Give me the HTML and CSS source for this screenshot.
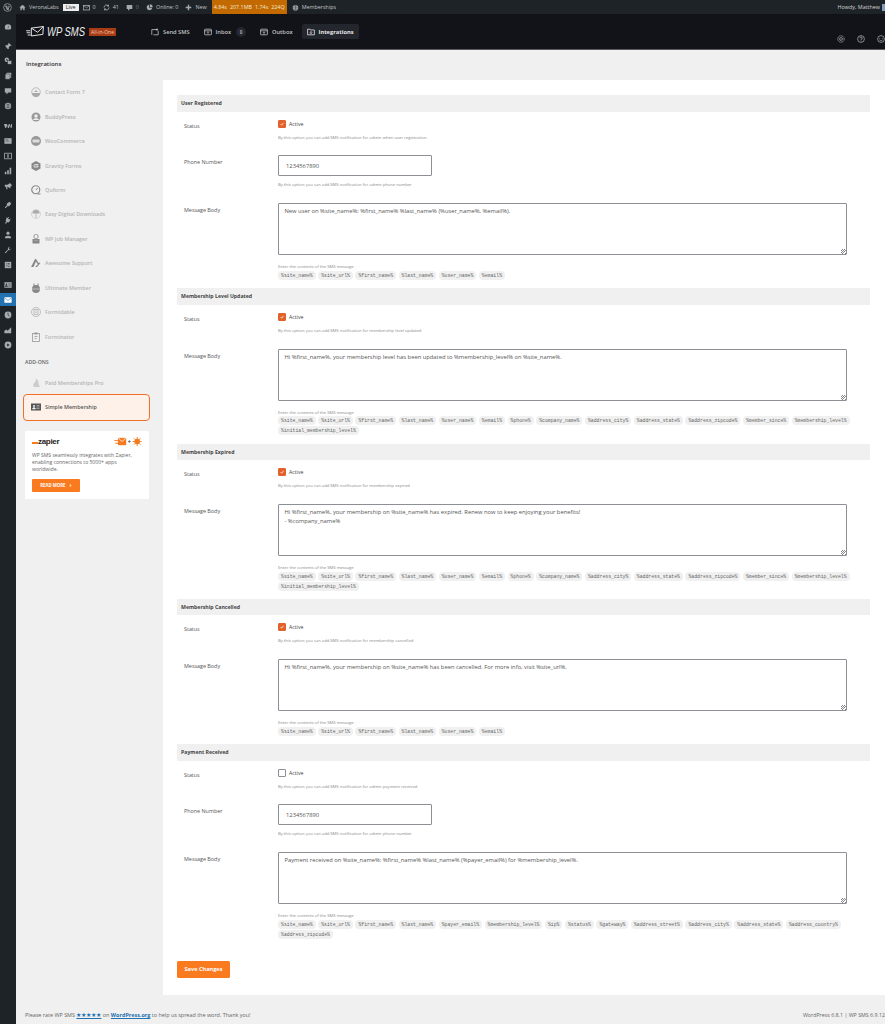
FILE: index.html
```html
<!DOCTYPE html>
<html lang="en">
<head>
  <meta charset="UTF-8">
  <title>Integrations - WP SMS</title>
  <link rel="stylesheet" href="styles.css">
</head>
<body>

  <div class="adminbar">
    <div class="bar_left">
      <svg class="bar_wp" viewBox="0 0 20 20"><circle cx="10" cy="10" r="8.6" fill="none" stroke="currentColor" stroke-width="1.6"/><path d="M4.5 7h4l2.6 8.5L14 7h-2.5M6.5 7l3 8.5" fill="none" stroke="currentColor" stroke-width="1.8"/></svg>
      <span class="bar_item home"><svg viewBox="0 0 20 20"><path d="M10 2 1 10h3v8h4v-5h4v5h4v-8h3z" fill="currentColor"/></svg>VeronaLabs <b class="live">Live</b></span>
      <span class="bar_item"><svg viewBox="0 0 20 20"><rect x="1" y="4" width="18" height="13" fill="none" stroke="currentColor" stroke-width="2.4"/><path d="m2 5 8 6 8-6" fill="none" stroke="currentColor" stroke-width="2"/></svg>0</span>
      <span class="bar_item"><svg viewBox="0 0 20 20"><path d="M3 10a7 7 0 0 1 12-5M17 10a7 7 0 0 1-12 5" fill="none" stroke="currentColor" stroke-width="2.6"/><path d="M17 1v6h-6zM3 19v-6h6z" fill="currentColor"/></svg>41</span>
      <span class="bar_item dim"><svg viewBox="0 0 20 20"><path d="M2 3h16v11h-7l-5 5v-5H2z" fill="#a7aaad"/></svg>0</span>
      <span class="bar_item"><svg viewBox="0 0 20 20"><path d="M9 2a8 8 0 1 0 9 9H9z" fill="currentColor"/><path d="M11 1v8h8a8 8 0 0 0-8-8z" fill="currentColor"/></svg>Online: 0</span>
      <span class="bar_item new"><svg viewBox="0 0 20 20"><path d="M8 2h4v6h6v4h-6v6H8v-6H2V8h6z" fill="currentColor"/></svg>New</span>
      <span class="bar_perf"><i>4.84s</i><i>207.1MB</i><i>1.74s</i><i>224Q</i></span>
      <span class="bar_item"><svg viewBox="0 0 20 20"><circle cx="10" cy="11" r="8" fill="currentColor"/><path d="M10 3v16M2 11h16M5 5c3 2 7 2 10 0M5 17c3-2 7-2 10 0" stroke="#1d2327" fill="none"/></svg>Memberships</span>
    </div>
    <div class="bar_right">Howdy, Matthew <i class="bar_avatar"></i></div>
  </div>

  <div class="shell">
    <nav class="wpmenu">
      <div class="menu_group">
        <span class="menu_icon"><svg viewBox="0 0 20 20"><path d="M10 3a8 8 0 0 0-8 8c0 2 .8 4 2 5h12c1.2-1 2-3 2-5a8 8 0 0 0-8-8zm1 9H9l3-6z" fill="currentColor"/></svg></span>
      </div>
      <div class="menu_group">
        <span class="menu_icon"><svg viewBox="0 0 20 20"><path d="m11 1 8 8-2 1-1-1-4 4 0 4-2 1-4-4-4 5 4-6-3-3 1-2h4l4-4-1-1z" fill="currentColor"/></svg></span>
        <span class="menu_icon"><svg viewBox="0 0 20 20"><circle cx="7" cy="7" r="5.5" fill="currentColor"/><rect x="9" y="9" width="10" height="9" fill="currentColor" stroke="#1d2327"/><circle cx="7" cy="7" r="1.8" fill="#1d2327"/></svg></span>
        <span class="menu_icon"><svg viewBox="0 0 20 20"><rect x="6" y="2" width="12" height="13" rx="1" fill="currentColor"/><rect x="3" y="5" width="12" height="13" rx="1" fill="currentColor" stroke="#1d2327"/></svg></span>
        <span class="menu_icon"><svg viewBox="0 0 20 20"><path d="M2 3h16v11h-7l-5 5v-5H2z" fill="currentColor"/></svg></span>
        <span class="menu_icon"><svg viewBox="0 0 20 20"><circle cx="10" cy="10" r="8" fill="currentColor"/><path d="M10 2v16M2 10h16M4.5 5c3 2 8 2 11 0M4.5 15c3-2 8-2 11 0" stroke="#1d2327" fill="none"/></svg></span>
      </div>
      <div class="menu_group">
        <span class="menu_icon"><svg viewBox="0 0 20 20"><path d="m0 5 3 10h2l3-6 2 6h2l3-6 2 6h2l2-10h-3l-2 6-2-6h-2l-2 6-3-6z" fill="currentColor"/></svg></span>
        <span class="menu_icon"><svg viewBox="0 0 20 20"><rect x="1" y="3" width="18" height="14" fill="currentColor"/><path d="M4 7h6M4 10h9" stroke="#1d2327"/></svg></span>
        <span class="menu_icon"><svg viewBox="0 0 20 20"><rect x="1.5" y="3" width="17" height="14" fill="none" stroke="currentColor" stroke-width="2"/><path d="M12 7H9v3h2v3H8M10 5v10" fill="none" stroke="currentColor" stroke-width="1.5"/></svg></span>
        <span class="menu_icon"><svg viewBox="0 0 20 20"><path d="M2 12h4v6H2zM8 8h4v10H8zM14 2h4v16h-4z" fill="currentColor"/></svg></span>
        <span class="menu_icon"><svg viewBox="0 0 20 20"><path d="M2 7h7l7-5v14l-7-4H8l1 6H6l-1-6H2z" fill="currentColor"/><circle cx="16" cy="8" r="3" fill="currentColor"/></svg></span>
      </div>
      <div class="menu_group">
        <span class="menu_icon"><svg viewBox="0 0 20 20"><path d="m2 16 6-6-2-2 5-5 1 1 2-2 4 4-2 2 1 1-5 5-2-2-6 6z" fill="currentColor"/></svg></span>
        <span class="menu_icon"><svg viewBox="0 0 20 20"><path d="m7 3 2 2 3-3 1 1-3 3 3 3 3-3 1 1-3 3 2 2-5 4-2-1-4 4H3l-1-1 4-4-2-2z" fill="currentColor"/></svg></span>
        <span class="menu_icon"><svg viewBox="0 0 20 20"><circle cx="10" cy="5.5" r="4" fill="currentColor"/><path d="M2 18c0-8 16-8 16 0z" fill="currentColor"/></svg></span>
        <span class="menu_icon"><svg viewBox="0 0 20 20"><path d="M18 5a5 5 0 0 1-7 5l-7 8-2-2 8-7a5 5 0 0 1 5-7l-3 3 1 3 3 1z" fill="currentColor"/></svg></span>
        <span class="menu_icon"><svg viewBox="0 0 20 20"><rect x="2" y="2" width="16" height="16" fill="currentColor"/><path d="M5 7h4M5 12h4M12 5v4M10 7h4M11 12l3 3M14 12l-3 3" stroke="#1d2327" stroke-width="1.3"/></svg></span>
      </div>
      <div class="menu_group">
        <span class="menu_icon"><svg viewBox="0 0 20 20"><rect x="1" y="3" width="18" height="14" fill="currentColor"/><circle cx="6" cy="8" r="2" fill="#1d2327"/><path d="M3 14c0-4 6-4 6 0zM11 7h6M11 10h6M11 13h6" fill="#1d2327" stroke="#1d2327"/></svg></span>
        <span class="menu_icon active"><svg viewBox="0 0 20 20"><rect x="1" y="3" width="18" height="14" rx="1" fill="#fff"/><path d="m2 5 8 6 8-6" fill="none" stroke="#2271b1" stroke-width="1.5"/></svg></span>
        <span class="menu_icon"><svg viewBox="0 0 20 20"><circle cx="10" cy="10" r="8.5" fill="currentColor"/><path d="M10 4v6l4 3" fill="none" stroke="#1d2327" stroke-width="1.5"/></svg></span>
        <span class="menu_icon"><svg viewBox="0 0 20 20"><path d="M1 18v-6l5-3 3 3 9-9v15z" fill="currentColor"/></svg></span>
        <span class="menu_icon"><svg viewBox="0 0 20 20"><circle cx="10" cy="10" r="8.5" fill="currentColor"/><path d="m8 6 6 4-6 4z" fill="#1d2327"/></svg></span>
      </div>
    </nav>

    <div class="main">
      <header class="plugin_header">
        <div class="logo">
          <svg viewBox="0 0 34 21"><path d="M10 4 33 1l-1 15-22 3zM10 4l12 8L33 1" fill="none" stroke="#eee" stroke-width="1.8"/><path d="M0 9h8M1 13h7M3 17h6" stroke="#ddd" stroke-width="2"/></svg>
          <span class="logo_text">WP SMS</span>
          <span class="logo_badge">All-in-One</span>
        </div>
        <nav class="tabs">
          <a href="#" class="tab"><svg viewBox="0 0 20 20"><path d="M2 17V4h13M18 7v10H6M15 1v6M12 4h6" fill="none" stroke="currentColor" stroke-width="2"/></svg>Send SMS</a>
          <a href="#" class="tab"><svg viewBox="0 0 20 20"><rect x="1.5" y="3" width="17" height="14" rx="1.5" fill="none" stroke="currentColor" stroke-width="2"/><path d="M1 7h18M10 8v5M7.5 11l2.5 2.5 2.5-2.5" fill="none" stroke="currentColor" stroke-width="1.8"/></svg>Inbox <span class="tab_count">0</span></a>
          <a href="#" class="tab"><svg viewBox="0 0 20 20"><rect x="1.5" y="3" width="17" height="14" rx="1.5" fill="none" stroke="currentColor" stroke-width="2"/><path d="M1 7h18M10 16v-6M7.5 12 10 9.5l2.5 2.5" fill="none" stroke="currentColor" stroke-width="1.8"/></svg>Outbox</a>
          <a href="#" class="tab current"><svg viewBox="0 0 20 20"><path d="M1.5 17V3h6l2 2h9v12z" fill="none" stroke="currentColor" stroke-width="2"/><path d="M10 7v7M7 11l3 3 3-3" fill="none" stroke="currentColor" stroke-width="1.8"/></svg>Integrations</a>
        </nav>
        <div class="header_icons">
          <svg viewBox="0 0 20 20"><circle cx="10" cy="10" r="8" fill="none" stroke="currentColor" stroke-width="1.8" stroke-dasharray="4 1"/><circle cx="10" cy="10" r="3.5" fill="none" stroke="currentColor" stroke-width="1.8"/></svg>
          <svg viewBox="0 0 20 20"><circle cx="10" cy="10" r="8.5" fill="none" stroke="currentColor" stroke-width="1.8"/><path d="M7 8a3 3 0 1 1 3 3v2M10 14v2" fill="none" stroke="currentColor" stroke-width="1.8"/></svg>
          <svg viewBox="0 0 20 20"><circle cx="10" cy="10" r="8.5" fill="none" stroke="currentColor" stroke-width="1.8"/><circle cx="7" cy="8" r="1.2" fill="currentColor"/><circle cx="13" cy="8" r="1.2" fill="currentColor"/><path d="M6 12c2 3 6 3 8 0" fill="none" stroke="currentColor" stroke-width="1.6"/></svg>
        </div>
      </header>

      <h1 class="page_title">Integrations</h1>

      <div class="columns">
        <aside class="side">
          <ul class="side_list">
            <li><svg viewBox="0 0 20 20"><circle cx="10" cy="10" r="8.5" fill="none" stroke="#aaa" stroke-width="1.5"/><path d="M2 12h16a8 8 0 0 1-16 0zM6 10l4-4 4 4z" fill="#aaa"/></svg>Contact Form 7</li>
            <li><svg viewBox="0 0 20 20"><circle cx="10" cy="10" r="9" fill="#999"/><circle cx="10" cy="8" r="3.5" fill="#eee"/><path d="M4 16c1-5 11-5 12 0z" fill="#eee"/></svg>BuddyPress</li>
            <li><svg viewBox="0 0 20 20"><circle cx="10" cy="10" r="10" fill="#999"/><rect x="3" y="7" width="14" height="6" rx="1.5" fill="#ddd"/></svg>WooCommerce</li>
            <li><svg viewBox="0 0 20 20"><path d="M10 0 19 5v10l-9 5-9-5V5z" fill="#888"/><path d="M15 7H8a2 2 0 0 0-2 2v3h8V10H9" fill="none" stroke="#eee" stroke-width="1.6"/></svg>Gravity Forms</li>
            <li><svg viewBox="0 0 20 20"><circle cx="9.5" cy="9.5" r="8" fill="none" stroke="#888" stroke-width="2.4"/><path d="M10 10l3-4M13 18h6" stroke="#888" stroke-width="2"/></svg>Quform</li>
            <li><svg viewBox="0 0 20 20"><circle cx="10" cy="10" r="9" fill="none" stroke="#bbb"/><path d="M3 9a7 7 0 0 1 14 0z" fill="#aaa"/><path d="M10 9v9" stroke="#aaa" stroke-width="1.5"/></svg>Easy Digital Downloads</li>
            <li><svg viewBox="0 0 20 20"><rect x="6" y="1" width="8" height="8" rx="3" fill="none" stroke="#888" stroke-width="1.6"/><rect x="3" y="10" width="14" height="9" fill="#888"/><path d="M7 13h2M11 13h2" stroke="#eee"/></svg>WP Job Manager</li>
            <li><svg viewBox="0 0 20 20"><path d="M0 18 8 2h2l6 9-3 1-3-5-5 11zM8 18l9-9 2 1-7 8z" fill="#888"/></svg>Awesome Support</li>
            <li><svg viewBox="0 0 20 20"><circle cx="10" cy="12" r="8" fill="#888"/><path d="M6 1v8M14 1v8" stroke="#888" stroke-width="2"/><path d="M2 12h16" stroke="#eee"/></svg>Ultimate Member</li>
            <li><svg viewBox="0 0 20 20"><circle cx="10" cy="10" r="9" fill="none" stroke="#aaa" stroke-width="1.4"/><rect x="6" y="5" width="8" height="10" fill="none" stroke="#aaa" stroke-width="1.4"/><path d="M8 8h4M8 11h4" stroke="#aaa"/></svg>Formidable</li>
            <li><svg viewBox="0 0 20 20"><rect x="3" y="3" width="14" height="16" fill="none" stroke="#999" stroke-width="1.6"/><rect x="7" y="1" width="6" height="4" fill="#999"/><path d="M7 9h6M7 13h4" stroke="#999" stroke-width="1.6"/></svg>Forminator</li>
          </ul>
          <h2 class="side_heading">ADD-ONS</h2>
          <ul class="side_list">
            <li><svg viewBox="0 0 20 20"><path d="M10 1c4 3 6 7 5 11l3 6H6c-3-4 0-6 0-9 2 1 3 0 4-8z" fill="#ccc"/></svg>Paid Memberships Pro</li>
            <li class="selected"><svg viewBox="0 0 20 20"><rect x="0" y="3" width="20" height="14" fill="#555"/><circle cx="6" cy="8" r="2" fill="#eee"/><path d="M3 14c0-4 6-4 6 0zM11 7h6M11 10h6M11 13h6" fill="#eee" stroke="#eee"/></svg>Simple Membership</li>
          </ul>
          <div class="zapier">
            <div class="zapier_top">
              <span class="zapier_logo"><i></i>zapier</span>
              <svg viewBox="0 0 30 12"><path d="M0 5h5M1 8h5" stroke="#f47b20"/><path d="M4 2h9v8H4z" fill="#f47b20"/><path d="m4 2 4.5 4L13 2" fill="none" stroke="#fff" stroke-width=".8"/><path d="M15 6h3M16.5 4.5v3" stroke="#777"/><circle cx="25" cy="6" r="3" fill="#f47b20"/><path d="M25 1v10M20 6h10M21.5 2.5l7 7M28.5 2.5l-7 7" stroke="#f47b20"/></svg>
            </div>
            <p>WP SMS seamlessly integrates with Zapier, enabling connections to 5000+ apps worldwide.</p>
            <a href="#" class="zapier_btn">READ MORE <span>›</span></a>
          </div>
        </aside>

        <form class="card">

          <section class="group">
            <h3 class="group_title">User Registered</h3>
            <div class="row status_row">
              <div class="row_label">Status</div>
              <div class="row_field">
                <label class="active_label"><span class="check on"><svg viewBox="0 0 10 10"><path d="m2.5 5 2 2 3-4" fill="none" stroke="#fff" stroke-width="1.2"/></svg></span>Active</label>
                <p class="help">By this option you can add SMS notification for admin when user registration</p>
              </div>
            </div>
            <div class="row phone_row">
              <div class="row_label">Phone Number</div>
              <div class="row_field">
                <input class="text_input" type="text" value="1234567890">
                <p class="help">By this option you can add SMS notification for admin phone number</p>
              </div>
            </div>
            <div class="row body_row">
              <div class="row_label">Message Body</div>
              <div class="row_field">
                <div class="area_wrap"><textarea class="area">New user on %site_name%: %first_name% %last_name% (%user_name%, %email%).</textarea><i class="grip"></i></div>
                <p class="help">Enter the contents of the SMS message</p>
                <div class="chips">
                  <code>%site_name%</code><code>%site_url%</code><code>%first_name%</code><code>%last_name%</code><code>%user_name%</code><code>%email%</code>
                </div>
              </div>
            </div>
          </section>

          <section class="group">
            <h3 class="group_title">Membership Level Updated</h3>
            <div class="row status_row">
              <div class="row_label">Status</div>
              <div class="row_field">
                <label class="active_label"><span class="check on"><svg viewBox="0 0 10 10"><path d="m2.5 5 2 2 3-4" fill="none" stroke="#fff" stroke-width="1.2"/></svg></span>Active</label>
                <p class="help">By this option you can add SMS notification for membership level updated</p>
              </div>
            </div>
            <div class="row body_row">
              <div class="row_label">Message Body</div>
              <div class="row_field">
                <div class="area_wrap"><textarea class="area">Hi %first_name%, your membership level has been updated to %membership_level% on %site_name%.</textarea><i class="grip"></i></div>
                <p class="help">Enter the contents of the SMS message</p>
                <div class="chips">
                  <code>%site_name%</code><code>%site_url%</code><code>%first_name%</code><code>%last_name%</code><code>%user_name%</code><code>%email%</code><code>%phone%</code><code>%company_name%</code><code>%address_city%</code><code>%address_state%</code><code>%address_zipcode%</code><code>%member_since%</code><code>%membership_level%</code><code>%initial_membership_level%</code>
                </div>
              </div>
            </div>
          </section>

          <section class="group">
            <h3 class="group_title">Membership Expired</h3>
            <div class="row status_row">
              <div class="row_label">Status</div>
              <div class="row_field">
                <label class="active_label"><span class="check on"><svg viewBox="0 0 10 10"><path d="m2.5 5 2 2 3-4" fill="none" stroke="#fff" stroke-width="1.2"/></svg></span>Active</label>
                <p class="help">By this option you can add SMS notification for membership expired</p>
              </div>
            </div>
            <div class="row body_row">
              <div class="row_label">Message Body</div>
              <div class="row_field">
                <div class="area_wrap"><textarea class="area">Hi %first_name%, your membership on %site_name% has expired. Renew now to keep enjoying your benefits!
- %company_name%</textarea><i class="grip"></i></div>
                <p class="help">Enter the contents of the SMS message</p>
                <div class="chips">
                  <code>%site_name%</code><code>%site_url%</code><code>%first_name%</code><code>%last_name%</code><code>%user_name%</code><code>%email%</code><code>%phone%</code><code>%company_name%</code><code>%address_city%</code><code>%address_state%</code><code>%address_zipcode%</code><code>%member_since%</code><code>%membership_level%</code><code>%initial_membership_level%</code>
                </div>
              </div>
            </div>
          </section>

          <section class="group">
            <h3 class="group_title">Membership Cancelled</h3>
            <div class="row status_row">
              <div class="row_label">Status</div>
              <div class="row_field">
                <label class="active_label"><span class="check on"><svg viewBox="0 0 10 10"><path d="m2.5 5 2 2 3-4" fill="none" stroke="#fff" stroke-width="1.2"/></svg></span>Active</label>
                <p class="help">By this option you can add SMS notification for membership cancelled</p>
              </div>
            </div>
            <div class="row body_row">
              <div class="row_label">Message Body</div>
              <div class="row_field">
                <div class="area_wrap"><textarea class="area">Hi %first_name%, your membership on %site_name% has been cancelled. For more info, visit %site_url%.</textarea><i class="grip"></i></div>
                <p class="help">Enter the contents of the SMS message</p>
                <div class="chips">
                  <code>%site_name%</code><code>%site_url%</code><code>%first_name%</code><code>%last_name%</code><code>%user_name%</code><code>%email%</code>
                </div>
              </div>
            </div>
          </section>

          <section class="group">
            <h3 class="group_title">Payment Received</h3>
            <div class="row status_row">
              <div class="row_label">Status</div>
              <div class="row_field">
                <label class="active_label"><span class="check"></span>Active</label>
                <p class="help">By this option you can add SMS notification for admin payment received</p>
              </div>
            </div>
            <div class="row phone_row">
              <div class="row_label">Phone Number</div>
              <div class="row_field">
                <input class="text_input" type="text" value="1234567890">
                <p class="help">By this option you can add SMS notification for admin phone number</p>
              </div>
            </div>
            <div class="row body_row">
              <div class="row_label">Message Body</div>
              <div class="row_field">
                <div class="area_wrap"><textarea class="area">Payment received on %site_name%: %first_name% %last_name% (%payer_email%) for %membership_level%.</textarea><i class="grip"></i></div>
                <p class="help">Enter the contents of the SMS message</p>
                <div class="chips">
                  <code>%site_name%</code><code>%site_url%</code><code>%first_name%</code><code>%last_name%</code><code>%payer_email%</code><code>%membership_level%</code><code>%ip%</code><code>%status%</code><code>%gateway%</code><code>%address_street%</code><code>%address_city%</code><code>%address_state%</code><code>%address_country%</code><code>%address_zipcode%</code>
                </div>
              </div>
            </div>
          </section>

          <button type="button" class="save_btn">Save Changes</button>
        </form>
      </div>

      <footer class="footer">
        <span class="footer_left">Please rate WP SMS <a href="#" class="stars">★★★★★</a> on <a href="#"><b>WordPress.org</b></a> to help us spread the word. Thank you!</span>
        <span>WordPress 6.8.1 | WP SMS 6.9.12</span>
      </footer>
    </div>
  </div>

</body>
</html>
```

FILE: styles.css
```css
* {
  box-sizing: border-box;
}

html, body {
  height: 1024px;
  overflow: hidden;
}

body {
  margin: 0;
  background: #f0f0f0;
  color: #444;
  font-family: "Open Sans", "Noto Sans", sans-serif;
  font-size: 5.5px;
}

p, h1, h2, h3, ul {
  margin: 0;
  padding: 0;
}

a {
  text-decoration: none;
  color: inherit;
}

i {
  font-style: normal;
}

/* admin bar */
.adminbar {
  height: 14px;
  background: #1d2327;
  color: #c3c4c7;
  display: flex;
  justify-content: space-between;
  align-items: center;
  font-size: 5.4px;
}

.bar_left {
  display: flex;
  align-items: center;
  height: 100%;
  padding-left: 3px;
}

.bar_wp {
  width: 9px;
  height: 9px;
  color: #a7aaad;
  margin-right: 7px;
}

.bar_item {
  display: flex;
  align-items: center;
  gap: 3px;
  margin-right: 7px;
}

.bar_item.home {
  margin-right: 4px;
}

.bar_item.new {
  margin-right: 5px;
}

.bar_item svg {
  width: 7px;
  height: 7px;
  color: #a7aaad;
}

.bar_item.dim {
  color: #72777c;
}

.live {
  background: #eee;
  color: #1d2327;
  font-weight: 400;
  padding: 0 3px;
  line-height: 7px;
  margin-left: 1px;
}

.bar_perf {
  background: #c26a00;
  color: #f5e8d5;
  height: 100%;
  width: 75px;
  margin-right: 5px;
  display: flex;
  align-items: center;
  justify-content: center;
  gap: 3px;
}

.bar_right {
  display: flex;
  align-items: center;
  gap: 2px;
  color: #d5d6d8;
}

.bar_avatar {
  width: 3px;
  height: 7px;
  background: #7f9fc0;
}

/* page frame */
.shell {
  display: flex;
  height: 1010px;
}

.wpmenu {
  width: 16px;
  flex: none;
  background: #1d2327;
  padding-top: 5px;
  color: #a7aaad;
}

.menu_group {
  margin-bottom: 4.5px;
}

.menu_icon {
  display: flex;
  align-items: center;
  justify-content: center;
  height: 15px;
}

.menu_icon svg {
  width: 8px;
  height: 8px;
}

.menu_icon.active {
  background: #2271b1;
  height: 13px;
  margin: 1px 0;
}

.main {
  flex: 1;
  min-width: 0;
  display: flex;
  flex-direction: column;
}

/* plugin header */
.plugin_header {
  height: 36px;
  background: #111318;
  border-bottom: 1px solid #5c5c60;
  display: flex;
  align-items: center;
  padding-left: 10px;
}

.logo {
  display: flex;
  align-items: center;
  width: 120px;
  color: #eee;
}

.logo svg {
  width: 18px;
  height: 11px;
}

/* no narrow italic installed, squeeze it */
.logo_text {
  display: inline-block;
  width: 37px;
  margin: 0 5px 0 3px;
  font-family: "Liberation Sans", sans-serif;
  font-style: italic;
  font-size: 13.5px;
  white-space: nowrap;
  transform: scaleX(.7);
  transform-origin: left center;
}

.logo_badge {
  background: #a83c14;
  color: #f0c8b4;
  font-size: 5px;
  line-height: 8px;
  padding: 0 2px;
}

.tabs {
  display: flex;
  align-items: center;
  gap: 4px;
}

.tab {
  display: flex;
  align-items: center;
  gap: 4px;
  height: 15px;
  padding: 0 5px;
  color: #c4c4c8;
  font-weight: 600;
  font-size: 5.7px;
  border-radius: 2px;
}

.tab svg {
  width: 8px;
  height: 8px;
}

.tab_count {
  width: 10px;
  height: 10px;
  border-radius: 50%;
  background: #24272d;
  text-align: center;
  line-height: 10px;
  font-size: 4.5px;
  margin-left: 1px;
}

.tab.current {
  background: #23262c;
  color: #e5e5e5;
  font-weight: 700;
}

.header_icons {
  margin-left: auto;
  align-self: flex-end;
  display: flex;
  gap: 12px;
  padding: 0 0 6px;
  color: #b0b2b6;
}

.header_icons svg {
  width: 8px;
  height: 8px;
}

/* body columns */
.page_title {
  height: 30px;
  padding: 10px 0 0 10px;
  font-size: 6px;
  font-weight: 600;
  color: #333;
  line-height: 8px;
}

.columns {
  display: flex;
}

.side {
  width: 147px;
  flex: none;
  padding: 0 13px 0 7px;
}

.side_list {
  list-style: none;
  color: #b4b4b4;
  font-weight: 600;
  font-size: 5.4px;
}

.side_list li {
  display: flex;
  align-items: center;
  gap: 4px;
  height: 24.45px;
  padding-left: 8px;
}

.side_list svg {
  width: 10px;
  height: 10px;
  flex: none;
}

.side_list li.selected {
  height: 27px;
  margin-top: -1.5px;
  border: 1.2px solid #f0702a;
  border-radius: 4px;
  background: #fdf1ea;
  color: #555;
  padding-left: 7px;
}

.side_heading {
  margin: 9px 0 0 2px;
  font-size: 5.2px;
  font-weight: 600;
  color: #666;
  line-height: 8px;
}

.side_heading + .side_list {
  margin-top: 5px;
}

/* zapier promo */
.zapier {
  margin: 10px 1px 0 2px;
  height: 68px;
  background: #fff;
  padding: 5px 7px 0;
  border-radius: 1px;
}

.zapier_top {
  display: flex;
  justify-content: space-between;
  align-items: center;
}

.zapier_top svg {
  width: 28px;
  height: 11px;
}

.zapier_logo {
  display: flex;
  align-items: flex-end;
  font-family: "Liberation Sans", sans-serif;
  font-size: 8px;
  font-weight: 700;
  color: #2b2320;
  letter-spacing: -.3px;
}

.zapier_logo i {
  width: 6px;
  height: 1.5px;
  background: #f47b20;
  margin: 0 0 2px;
}

.zapier p {
  margin-top: 5px;
  padding-right: 8px;
  font-size: 5.05px;
  line-height: 7px;
  color: #666;
}

.zapier_btn {
  display: inline-flex;
  align-items: center;
  justify-content: center;
  gap: 4px;
  width: 48px;
  height: 13px;
  margin-top: 6px;
  background: #fa7a1f;
  color: #fff;
  font-size: 4.3px;
  font-weight: 700;
  border-radius: 1px;
}

.zapier_btn span {
  font-size: 6px;
}

/* settings card */
.card {
  flex: 1;
  min-width: 0;
  height: 915px;
  background: #fff;
  padding: 15px 15px 0 14px;
}

.group_title {
  height: 16.7px;
  background: #f0f0f0;
  padding-left: 4px;
  font-size: 5.2px;
  font-weight: 700;
  color: #444;
  line-height: 16.7px;
}

.row {
  display: grid;
  grid-template-columns: 94px 1fr;
  padding: 7px 14px 0 7px;
}

.row_label {
  padding-top: 3px;
  font-size: 5.4px;
  line-height: 8px;
  color: #555;
}

.status_row {
  padding-bottom: 7.6px;
}

.phone_row {
  padding-bottom: 8px;
}

.body_row {
  padding-bottom: 8.2px;
}

.active_label {
  display: flex;
  align-items: center;
  gap: 3px;
  height: 8px;
  margin-top: 1px;
  font-size: 5.2px;
  color: #444;
}

.check {
  width: 8px;
  height: 8px;
  flex: none;
  border: 1px solid #8c8f94;
  border-radius: 1px;
  background: #fff;
  display: flex;
}

.check.on {
  background: #e2622c;
  border-color: #e2622c;
}

.help {
  height: 6px;
  line-height: 6px;
  font-size: 4.17px;
  color: #888;
}

.status_row .help {
  margin-top: 7px;
}

.phone_row .help {
  margin-top: 6px;
}

.body_row .help {
  margin-top: 9px;
}

.text_input {
  display: block;
  width: 154px;
  height: 21px;
  border: 1px solid #8c8f94;
  border-radius: 1px;
  padding: 0 7px;
  background: #fff;
  color: #555;
  font: 5.8px "Open Sans", sans-serif;
}

.area_wrap {
  position: relative;
  width: 569px;
  height: 52px;
}

.area {
  display: block;
  width: 100%;
  height: 100%;
  border: 1px solid #8c8f94;
  border-radius: 1px;
  padding: 3px 5.5px;
  resize: none;
  background: #fff;
  color: #555;
  font: 5.8px/9px "Open Sans", sans-serif;
  overflow: hidden;
}

.grip {
  position: absolute;
  right: 1px;
  bottom: 1px;
  width: 5px;
  height: 5px;
  background: repeating-linear-gradient(135deg, transparent 0, transparent 1px, #888 1px, #888 1.6px);
}

.chips {
  display: flex;
  flex-wrap: wrap;
  gap: 1px 2.5px;
  margin-top: .8px;
}

.chips code {
  height: 9px;
  line-height: 9px;
  padding: 0 3px;
  border-radius: 4px;
  background: #f0f0f0;
  color: #666;
  font-family: "Liberation Mono", monospace;
  font-size: 4.8px;
}

.save_btn {
  display: block;
  width: 53px;
  height: 17px;
  margin-top: 13.5px;
  padding: 0;
  border: 0;
  border-radius: 1.5px;
  background: #fa7a1f;
  color: #fff;
  font: 700 5.6px "Open Sans", sans-serif;
}

.footer {
  flex: 1;
  display: flex;
  justify-content: space-between;
  align-items: center;
  padding: 10px 0 0 9px;
  color: #666;
  font-size: 5.3px;
}

.footer_left {
  font-size: 5.45px;
}

.footer a {
  color: #2271b1;
  text-decoration: underline;
}

.footer .stars {
  font-size: 6.4px;
}
```
